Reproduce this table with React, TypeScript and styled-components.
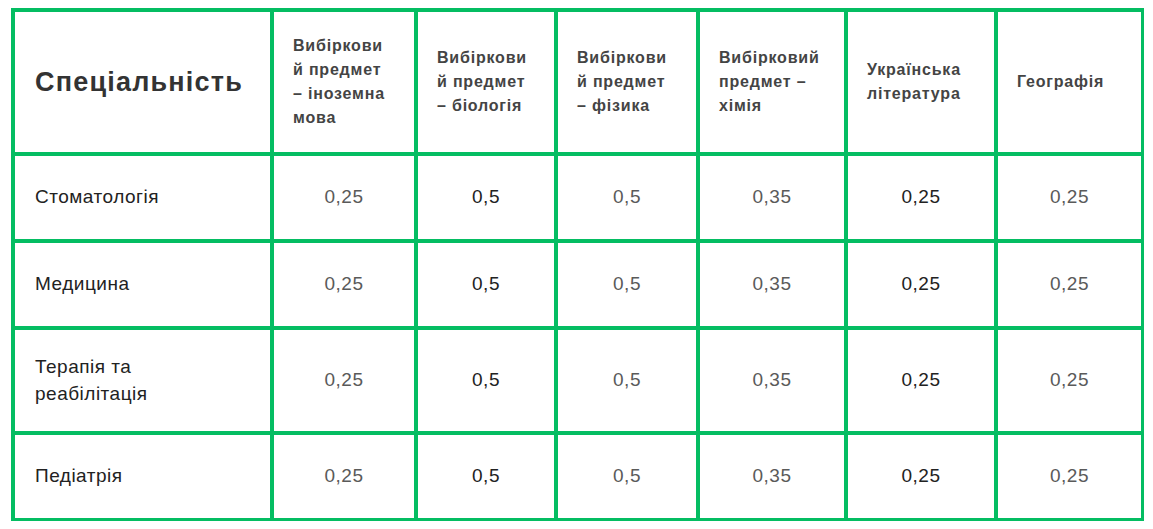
import styled, { createGlobalStyle } from 'styled-components';

interface IRow {
  name: string;
  values: string[];
  height: number;
}

const GREEN = '#04bd62';

const COLUMNS = [
  { title: 'Спеціальність', width: 259 },
  { title: 'Вибірковий предмет – іноземна мова', width: 144, tone: 'light' },
  { title: 'Вибірковий предмет – біологія', width: 140, tone: 'dark' },
  { title: 'Вибірковий предмет – фізика', width: 142, tone: 'light' },
  { title: 'Вибірковий предмет – хімія', width: 148, tone: 'light' },
  { title: 'Українська література', width: 150, tone: 'dark' },
  { title: 'Географія', width: 146, tone: 'light' },
];

const ROWS: IRow[] = [
  { name: 'Стоматологія', values: ['0,25', '0,5', '0,5', '0,35', '0,25', '0,25'], height: 87 },
  { name: 'Медицина', values: ['0,25', '0,5', '0,5', '0,35', '0,25', '0,25'], height: 87 },
  { name: 'Терапія та реабілітація', values: ['0,25', '0,5', '0,5', '0,35', '0,25', '0,25'], height: 105 },
  { name: 'Педіатрія', values: ['0,25', '0,5', '0,5', '0,35', '0,25', '0,25'], height: 86 },
];

export default function App() {
  const [first, ...subjects] = COLUMNS;

  return (
    <>
      <GlobalStyle />
      <Table>
        <colgroup>
          {COLUMNS.map((col) => (
            <col key={col.title} style={{ width: col.width }} />
          ))}
        </colgroup>
        <thead>
          <Row>
            <MainHead $h={144}>{first.title}</MainHead>
            {subjects.map((col) => (
              <SubjectHead key={col.title} $h={144}>
                {col.title}
              </SubjectHead>
            ))}
          </Row>
        </thead>
        <tbody>
          {ROWS.map((row) => (
            <Row key={row.name}>
              <NameCell $h={row.height}>{row.name}</NameCell>
              {row.values.map((value, i) => (
                <ValueCell key={i} $h={row.height} $dark={subjects[i].tone === 'dark'}>
                  {value}
                </ValueCell>
              ))}
            </Row>
          ))}
        </tbody>
      </Table>
    </>
  );
}

const GlobalStyle = createGlobalStyle`
  body {
    margin: 0;
    background: #fff;
    font-family: "Liberation Sans", Arial, sans-serif;
  }
`;

const Table = styled.table`
  width: 1133px;
  margin: 8px 0 0 11px;
  table-layout: fixed;
  border-collapse: separate;
  border-spacing: 0;
  border-top: 4px solid ${GREEN};
  border-left: 4px solid ${GREEN};
`;

const Row = styled.tr`
  & > *:last-child {
    border-right-width: 3px;
  }

  tbody &:last-child > * {
    border-bottom-width: 3px;
  }
`;

const Cell = styled.td<{ $h: number }>`
  box-sizing: border-box;
  height: ${(p) => p.$h}px;
  padding: 0 20px;
  border-right: 4px solid ${GREEN};
  border-bottom: 4px solid ${GREEN};
  vertical-align: middle;
`;

const MainHead = styled(Cell).attrs({ as: 'th' })`
  text-align: left;
  font-size: 27px;
  font-weight: 700;
  letter-spacing: 1.2px;
  color: #333;
`;

const SubjectHead = styled(Cell).attrs({ as: 'th' })`
  padding: 0 22px 0 19px;
  text-align: left;
  font-size: 16px;
  line-height: 24px;
  font-weight: 700;
  letter-spacing: 0.8px;
  color: #444;
  overflow-wrap: break-word;
`;

const NameCell = styled(Cell)`
  padding: 0 24px 2px 20px;
  font-size: 19px;
  line-height: 27px;
  color: #222;
  letter-spacing: 0.5px;
`;

const ValueCell = styled(Cell)<{ $dark: boolean }>`
  padding-bottom: 2px;
  text-align: center;
  font-size: 19px;
  letter-spacing: 0.5px;
  color: ${(p) => (p.$dark ? '#222' : '#5a5a5a')};
`;
